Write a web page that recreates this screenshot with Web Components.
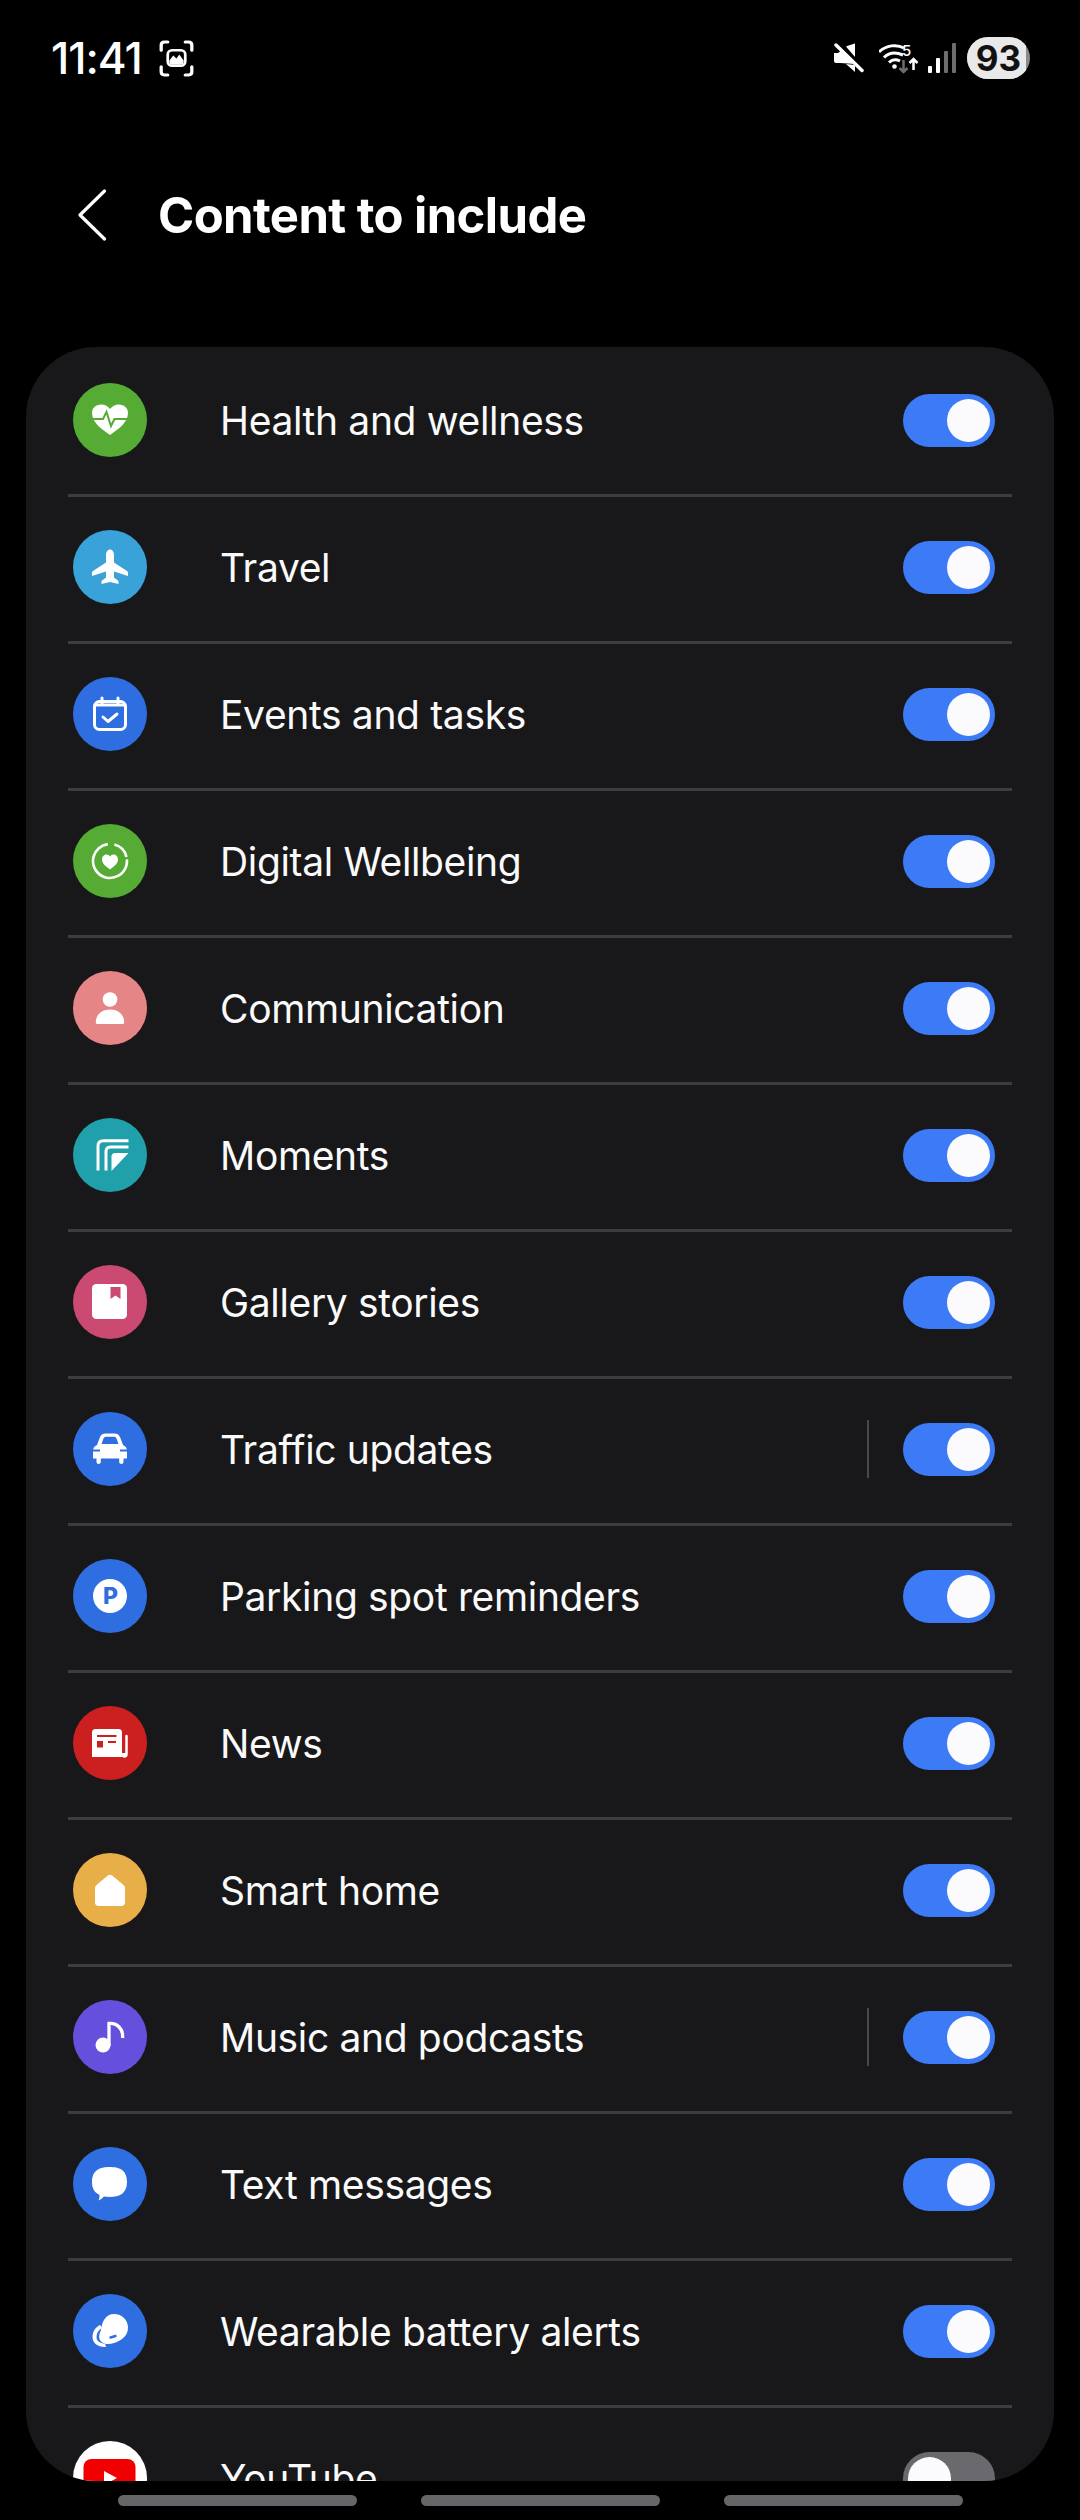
<!DOCTYPE html>
<html>
<head>
<meta charset="utf-8">
<style>
    html, body { margin: 0; background: #000; }
    body { width: 1080px; height: 2520px; overflow: hidden; font-family: Inter, "Noto Sans", sans-serif; color: #fff; }
</style>
</head>
<body>
<status-bar></status-bar>
<page-header title="Content to include"></page-header>
<settings-card>
    <setting-row label="Health and wellness" color="#56ab35" icon="health"></setting-row>
    <setting-row label="Travel" color="#38a2d9" icon="plane"></setting-row>
    <setting-row label="Events and tasks" color="#2f6ee0" icon="calendar"></setting-row>
    <setting-row label="Digital Wellbeing" color="#56ab35" icon="wellbeing"></setting-row>
    <setting-row label="Communication" color="#e58585" icon="person"></setting-row>
    <setting-row label="Moments" color="#20a0aa" icon="moments"></setting-row>
    <setting-row label="Gallery stories" color="#cb4a72" icon="gallery"></setting-row>
    <setting-row label="Traffic updates" color="#2f6ee0" icon="car" split></setting-row>
    <setting-row label="Parking spot reminders" color="#2f6ee0" icon="parking"></setting-row>
    <setting-row label="News" color="#cc1f1f" icon="news"></setting-row>
    <setting-row label="Smart home" color="#e8ae48" icon="home"></setting-row>
    <setting-row label="Music and podcasts" color="#6450dc" icon="music" split></setting-row>
    <setting-row label="Text messages" color="#2f6ee0" icon="message"></setting-row>
    <setting-row label="Wearable battery alerts" color="#2f6ee0" icon="earbud"></setting-row>
    <setting-row label="YouTube" color="#ffffff" icon="youtube" off></setting-row>
</settings-card>
<nav-pills></nav-pills>

<script>
const ICONS = {
    health: (c) => `<path fill="#fff" d="M37 52 C30 47 19 40 19 30 C19 25 23 21.500 28 21.500 C32 21.500 35 23.500 37 26 C39 23.500 42 21.500 46 21.500 C51 21.500 55 25 55 30 C55 40 44 47 37 52Z"/>
        <path fill="none" stroke="${c}" stroke-width="2" d="M17 36 H30 L33.500 29 L38 43 L41.500 36 H57"/>`,
    plane: () => `<path fill="#fff" d="M37 19.500 C39.500 19.500 41 22 41 25 V32.500 L54 41 C54.700 41.500 55 42 55 43 V46 L41 41.500 V47.500 L45.500 51 V54 L37 52 L28.500 54 V51 L33 47.500 V41.500 L19 46 V43 C19 42 19.300 41.500 20 41 L33 32.500 V25 C33 22 34.500 19.500 37 19.500Z"/>`,
    calendar: () => `<rect x="21.500" y="24.500" width="31" height="28" rx="5" fill="none" stroke="#fff" stroke-width="3"/>
        <path fill="none" stroke="#fff" stroke-width="3" stroke-linecap="round" d="M29 21 V26 M45 21 V26 M22 28 H52"/>
        <path fill="none" stroke="#fff" stroke-width="3" stroke-linecap="round" stroke-linejoin="round" d="M30 40 L35 44.500 L44 37"/>`,
    wellbeing: () => `<circle cx="37" cy="37" r="17" fill="none" stroke="#fff" stroke-width="2.600" stroke-dasharray="18 2.500 79 7" transform="rotate(-75 37 37)"/>
        <path fill="#fff" d="M37 45.500 C33 42.500 29 39.500 29 35.500 C29 32.500 31.200 30.500 33.500 30.500 C35 30.500 36.200 31.300 37 32.500 C37.800 31.300 39 30.500 40.500 30.500 C42.800 30.500 45 32.500 45 35.500 C45 39.500 41 42.500 37 45.500Z"/>`,
    person: () => `<circle cx="37" cy="28.500" r="7.300" fill="#fff"/>
        <path fill="#fff" d="M24.500 53 C23.500 53 22.800 52.300 22.800 51.200 C22.800 43.500 29 38.500 37 38.500 C45 38.500 51.200 43.500 51.200 51.200 C51.200 52.300 50.500 53 49.500 53Z"/>`,
    moments: () => `<path fill="none" stroke="#fff" stroke-width="3" d="M25 52.500 V28 C25 24.500 27 22.800 30.500 22.800 H55.500"/>
        <path fill="none" stroke="#fff" stroke-width="3" d="M33 52.500 V33.500 C33 30.500 34.500 29 37.500 29 H55.500"/>
        <path fill="#fff" d="M38.500 53 V38.500 C38.500 36.300 39.800 35 42 35 H55.500Z"/>`,
    gallery: (c) => `<rect x="19" y="19" width="35" height="35" rx="4.500" fill="#fff"/>
        <path fill="${c}" d="M37.500 22 H47.500 V34 L42.500 30.500 L37.500 34Z"/>`,
    car: (c) => `<path fill="#fff" d="M27 25 C28 22.500 30 21.500 32.500 21.500 H41.500 C44 21.500 46 22.500 47 25 L50 33 C52.500 34 54 36 54 39 V46.500 H50.500 V50 C50.500 51.200 49.500 52 48.500 52 C47.300 52 46.200 51.200 46.200 50 V46.500 H27.800 V50 C27.800 51.200 26.700 52 25.500 52 C24.500 52 23.500 51.200 23.500 50 V46.500 H20 V39 C20 36 21.500 34 24 33Z"/>
        <path fill="${c}" d="M28.500 32 L30.500 26.500 C31 25.200 31.800 24.700 33 24.700 H41 C42.200 24.700 43 25.200 43.500 26.500 L45.500 32Z"/>
        <path fill="none" stroke="${c}" stroke-width="2" d="M18 38.500 H27 M47 38.500 H56"/>`,
    parking: (c) => `<circle cx="37" cy="37" r="17" fill="#fff"/>
        <text x="37.500" y="45" text-anchor="middle" font-family="Inter, sans-serif" font-weight="800" font-size="23" fill="${c}">P</text>`,
    news: (c) => `<rect x="19" y="23" width="30" height="28" rx="3.500" fill="#fff"/>
        <path fill="#fff" d="M19 47 H54 V51 H19Z"/>
        <path fill="none" stroke="#fff" stroke-width="2.500" stroke-linecap="round" d="M53.500 30 V48 C53.500 49.700 52.500 50.500 51 50.500"/>
        <path fill="${c}" d="M24 29 H43.500 V31 H24Z M24 35 H30 V41.500 H24Z M35 35 H43 V37 H35Z"/>`,
    home: () => `<path fill="#fff" d="M34.800 22.500 C36 21.400 38 21.400 39.200 22.500 L50.500 32 C51.500 32.900 52 34 52 35.300 V49.500 C52 51.500 50.500 53 48.500 53 H25.500 C23.500 53 22 51.500 22 49.500 V35.300 C22 34 22.500 32.900 23.500 32Z"/>`,
    music: () => `<circle cx="30" cy="45" r="7.500" fill="#fff"/>
        <path fill="none" stroke="#fff" stroke-width="3.300" d="M36 46 V23.500 C44 22.500 50.500 29 49.500 38"/>`,
    message: () => `<path fill="#fff" d="M36.500 20 C46 20 54 22.500 54 35 C54 46 47 50 36.500 50 C34.500 50 32.500 49.800 31 49.500 C29 51.500 27.500 52.800 25.500 53.500 C26.500 51.500 26.700 49.500 26.300 47.800 C21.500 45.500 19 41.500 19 35 C19 23 27 20 36.500 20Z"/>`,
    earbud: (c) => `<path fill="#fff" d="M19.500 43 C19.500 37 23 33 27 31 L29 34 C25.500 36 23.500 39 23.500 43 C23.500 47 27 49.500 32 49.500 L33 53 C25 53.500 19.500 49 19.500 43Z"/>
        <path fill="#fff" d="M41 20 C49 20 55 26 55 33.500 C55 43 47 47 41 49 C35 51 28 50 26.500 45 C25.500 41 27 39 28 36 C29 27 33 20 41 20Z"/>
        <path fill="none" stroke="${c}" stroke-width="2.400" stroke-linecap="round" d="M37.500 43.500 L42.500 42"/>`,
    youtube: () => `<rect x="10.500" y="18" width="52" height="38" rx="8" fill="#f00000"/>
        <path fill="#fff" d="M31 30 L44 37 L31 44Z"/>`
}

class StatusBar extends HTMLElement {
    constructor() {
        super()
        this.attachShadow({ mode: "open" })
    }

    connectedCallback() {
        this.shadowRoot.innerHTML = `
        <style>
            :host { display: flex; align-items: center; justify-content: space-between; height: 116px; padding: 0 50px 0 51px; box-sizing: border-box; }
            .left, .right { display: flex; align-items: center; }
            .time { font-size: 44px; font-weight: 500; letter-spacing: -1px; margin-right: 17px; color: #fff; }
            svg { display: block; }
            .right svg.mute { margin-right: 15px; }
            .right svg.wifi { margin-right: 9px; }
            .right svg.bars { margin-right: 11px; }
            .battery { width: 63px; height: 42px; border-radius: 21px; overflow: hidden; display: flex; background: #8a8a8a; }
            .level { width: 59px; background: #e9e9e9; color: #111; font-size: 35px; font-weight: 700; line-height: 42px; text-align: center; padding-left: 4px; box-sizing: border-box; }
        </style>
        <div class="left">
            <span class="time">11:41</span>
            <svg width="35" height="37" viewBox="0 0 32 36" preserveAspectRatio="none">
                <path fill="none" stroke="#fff" stroke-width="3" stroke-linecap="round" d="M2 10 V5 C2 3 3 2 5 2 H8 M24 2 H27 C29 2 30 3 30 5 V10 M2 26 V31 C2 33 3 34 5 34 H8 M24 34 H27 C29 34 30 33 30 31 V26"/>
                <rect x="8" y="10" width="16" height="15" rx="4" fill="none" stroke="#fff" stroke-width="2.500"/>
                <path fill="#fff" d="M9.500 20 L13 15 L16 18 L18.500 14 L22.500 20 V21.500 C22.500 23 21.500 24 20 24 H12 C10.500 24 9.500 23 9.500 21.500Z"/>
            </svg>
        </div>
        <div class="right">
            <svg class="mute" width="30" height="30" viewBox="0 0 30 30">
                <path fill="#fff" d="M0 10 H4 L13 3 L21 0.500 V21 L6 20 H2 C1 20 0 19 0 18Z"/>
                <path fill="#fff" d="M12 21 L21 29 V22Z"/>
                <path fill="none" stroke="#000" stroke-width="6" d="M4 -1 L32 31"/>
                <path fill="none" stroke="#fff" stroke-width="3.500" stroke-linecap="round" d="M2 2 L28 27.500"/>
            </svg>
            <svg class="wifi" width="40" height="32" viewBox="0 0 40 32">
                <path fill="none" stroke="#fff" stroke-width="3" d="M0 10 C7 3 18 2 25 6 M5 15.500 C10 10.500 17 10 24 13 M10 20.500 C13 17.500 17 17 21 19"/>
                <circle cx="15.500" cy="24.500" r="2.300" fill="#fff"/>
                <text x="23" y="14" font-family="Inter, sans-serif" font-size="15" font-weight="500" fill="#fff">5</text>
                <path fill="none" stroke="#6d6d6d" stroke-width="2.500" d="M24.500 18 V30 M20.500 26 L24.500 30 L28.500 26"/>
                <path fill="none" stroke="#fff" stroke-width="2.500" d="M34.500 28 V17 M30.500 21 L34.500 17 L38.500 21"/>
            </svg>
            <svg class="bars" width="28" height="30" viewBox="0 0 28 30">
                <rect x="0" y="23" width="4" height="7" rx="1" fill="#fff"/>
                <rect x="8" y="15" width="4" height="15" rx="1" fill="#fff"/>
                <rect x="16" y="8" width="4" height="22" rx="1" fill="#6d6d6d"/>
                <rect x="24" y="0" width="4" height="30" rx="1" fill="#6d6d6d"/>
            </svg>
            <div class="battery"><div class="level">93</div></div>
        </div>
        `
    }
}
customElements.define('status-bar', StatusBar)

class PageHeader extends HTMLElement {
    constructor() {
        super()
        this.attachShadow({ mode: "open" })
    }

    connectedCallback() {
        const title = this.getAttribute("title")
        this.shadowRoot.innerHTML = `
        <style>
            :host { display: flex; align-items: center; height: 198px; margin-bottom: 33px; padding-left: 78px; box-sizing: border-box; }
            svg { display: block; margin-right: 51px; }
            h1 { margin: 0; font-size: 49px; font-weight: 700; letter-spacing: -0.6px; color: #fff; }
        </style>
        <svg width="29" height="52" viewBox="0 0 29 52">
            <path fill="none" stroke="#fff" stroke-width="3.200" stroke-linecap="round" stroke-linejoin="round" d="M26.500 2 L2 26 L26.500 50"/>
        </svg>
        <h1>${title}</h1>
        `
    }
}
customElements.define('page-header', PageHeader)

class SettingsCard extends HTMLElement {
    constructor() {
        super()
        this.attachShadow({ mode: "open" })
    }

    connectedCallback() {
        this.shadowRoot.innerHTML = `
        <style>
            :host { display: block; height: 2134px; margin: 0 26px; padding: 3px 42px 0; box-sizing: border-box; background: #18181a; border-radius: 70px; overflow: hidden; }
        </style>
        <slot></slot>
        `
    }
}
customElements.define('settings-card', SettingsCard)

class ToggleSwitch extends HTMLElement {
    constructor() {
        super()
        this.attachShadow({ mode: "open" })
    }

    connectedCallback() {
        const off = this.hasAttribute("off")
        this.shadowRoot.innerHTML = `
        <style>
            :host { display: flex; align-items: center; width: 92px; height: 53px; padding: 0 5px; box-sizing: border-box; border-radius: 27px; justify-content: ${off ? "flex-start" : "flex-end"}; background: ${off ? "#6a6a6e" : "#3d7bf6"}; flex: none; }
            .knob { width: 43px; height: 43px; border-radius: 50%; background: #fbfbfd; }
        </style>
        <div class="knob"></div>
        `
    }
}
customElements.define('toggle-switch', ToggleSwitch)

class SettingRow extends HTMLElement {
    constructor() {
        super()
        this.attachShadow({ mode: "open" })
    }

    connectedCallback() {
        const label = this.getAttribute("label")
        const color = this.getAttribute("color")
        const icon = ICONS[this.getAttribute("icon")](color)
        const split = this.hasAttribute("split")
        const off = this.hasAttribute("off")

        this.shadowRoot.innerHTML = `
        <style>
            :host { display: block; }
            .main { display: flex; align-items: center; height: 144px; padding: 0 17px 4px 5px; box-sizing: border-box; }
            .badge { width: 74px; height: 74px; border-radius: 50%; background: ${color}; flex: none; overflow: hidden; }
            .badge svg { display: block; }
            .label { flex: 1; margin-left: 73px; padding-top: 1px; font-size: 39px; font-weight: 400; letter-spacing: -0.35px; color: #fafafa; white-space: nowrap; }
            .split { width: 2px; height: 58px; background: #48484a; margin-right: 34px; }
            .line { height: 3px; background: #3c3c3e; }
        </style>
        <div class="main">
            <div class="badge"><svg width="74" height="74" viewBox="0 0 74 74">${icon}</svg></div>
            <div class="label">${label}</div>
            ${split ? '<div class="split"></div>' : ''}
            <toggle-switch ${off ? 'off' : ''}></toggle-switch>
        </div>
        <div class="line"></div>
        `
    }
}
customElements.define('setting-row', SettingRow)

class NavPills extends HTMLElement {
    constructor() {
        super()
        this.attachShadow({ mode: "open" })
    }

    connectedCallback() {
        this.shadowRoot.innerHTML = `
        <style>
            :host { display: flex; justify-content: center; gap: 64px; padding-top: 14px; }
            div { width: 239px; height: 11px; border-radius: 6px; background: #666668; }
        </style>
        <div></div><div></div><div></div>
        `
    }
}
customElements.define('nav-pills', NavPills)
</script>
</body>
</html>
